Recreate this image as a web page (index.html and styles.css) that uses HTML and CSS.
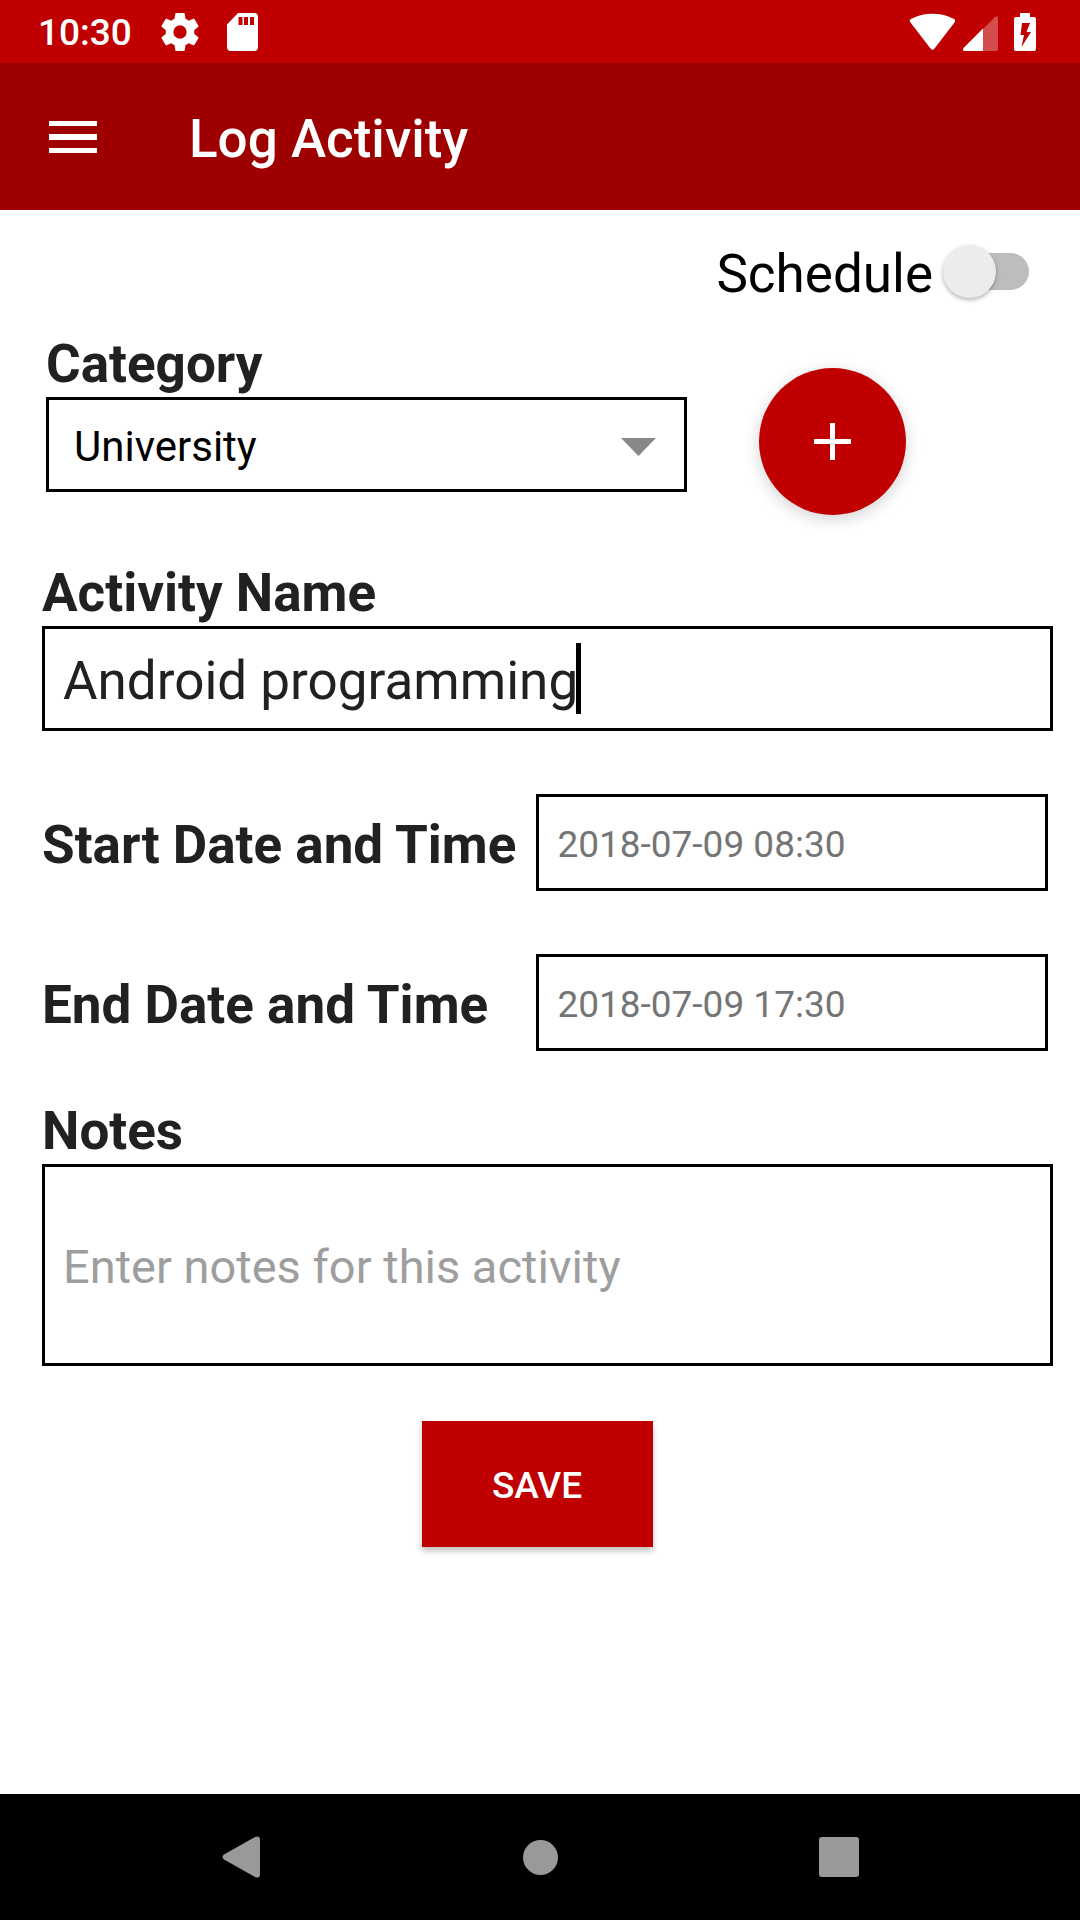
FILE: index.html
```html
<!DOCTYPE html>
<html lang="en">
<head>
  <meta charset="utf-8">
  <meta name="viewport" content="width=device-width, initial-scale=1">
  <title>Log Activity</title>
  <link rel="stylesheet" href="styles.css">
</head>
<body>
  <div class="status-bar">
    <span class="status-time">10:30</span>
    <svg class="status-settings" width="38" height="38" viewBox="2 2 20 20" aria-hidden="true"><path fill="#fff" d="M19.43 12.98c.04-.32.07-.64.07-.98s-.03-.66-.07-.98l2.11-1.65c.19-.15.24-.42.12-.64l-2-3.46c-.12-.22-.39-.3-.61-.22l-2.49 1c-.52-.4-1.08-.73-1.69-.98l-.38-2.65A.488.488 0 0 0 14 2h-4c-.25 0-.46.18-.49.42l-.38 2.65c-.61.25-1.17.59-1.69.98l-2.49-1c-.23-.09-.49 0-.61.22l-2 3.46c-.13.22-.07.49.12.64l2.11 1.65c-.04.32-.07.65-.07.98s.03.66.07.98l-2.11 1.65c-.19.15-.24.42-.12.64l2 3.46c.12.22.39.3.61.22l2.49-1c.52.4 1.08.73 1.69.98l.38 2.65c.03.24.24.42.49.42h4c.25 0 .46-.18.49-.42l.38-2.65c.61-.25 1.17-.59 1.69-.98l2.49 1c.23.09.49 0 .61-.22l2-3.46c.12-.22.07-.49-.12-.64l-2.11-1.65zM12 15.5a3.5 3.5 0 1 1 0-7 3.5 3.5 0 0 1 0 7z"/></svg>
    <svg width="31" height="38" viewBox="0 0 31 38" aria-hidden="true"><path fill="#fff" fill-rule="evenodd" d="M11 0h16a4 4 0 0 1 4 4v30a4 4 0 0 1-4 4H4a4 4 0 0 1-4-4V11.500zM11.500 4v8h4V4zm5.500 0v8h4V4zm6 0v8h4V4z"/></svg>
    <span class="status-space"></span>
    <svg width="46" height="38" viewBox="0 0 46 38" aria-hidden="true"><path fill="#fff" d="M1.500 9.500C.3 8 .3 7 2 6 14.500-1 32.500-1 45 6c1.700 1 1.700 2 .5 3.500L25.500 35.500q-2 2.500-4 0z"/></svg>
    <svg width="35" height="38" viewBox="0 0 35 38" aria-hidden="true"><path fill="#fff" opacity=".3" d="M20 16 32 4q3-2 3 1v31q0 2-2 2H20z"/><path fill="#fff" d="M20 15.500V38H2q-3 0-1.500-3z"/></svg>
    <svg class="status-battery" width="22" height="38" viewBox="0 0 22 38" aria-hidden="true"><path fill="#fff" fill-rule="evenodd" d="M6 0h10v4h4q2 0 2 2v30q0 2-2 2H2q-2 0-2-2V6q0-2 2-2h4zM8 10 6.500 22H10L7.500 34 17 19h-4.500L16 10z"/></svg>
  </div>

  <header class="app-bar">
    <button class="menu-button" type="button" aria-label="Open menu">
      <svg width="48" height="32" viewBox="0 0 48 32" aria-hidden="true"><path fill="#fff" d="M0 0h48v5H0zM0 13h48v6H0zM0 27h48v5H0z"/></svg>
    </button>
    <h1 class="app-title">Log Activity</h1>
  </header>

  <main class="content">
    <form class="activity-form">
      <div class="schedule-row">
        <label class="schedule-label" for="schedule">Schedule</label>
        <input class="switch" type="checkbox" role="switch" id="schedule">
      </div>

      <div class="category-row">
        <div class="category-group">
          <label class="field-label" for="category">Category</label>
          <div class="select-box">
            <select class="select-input" id="category"><option>University</option></select>
            <svg class="select-arrow" width="35" height="18" viewBox="0 0 35 18" aria-hidden="true"><path fill="#888" d="M0 0h35L17.500 18z"/></svg>
          </div>
        </div>
        <button class="add-button" type="button" aria-label="Add category">
          <svg width="37" height="37" viewBox="0 0 37 37" aria-hidden="true"><path fill="#fff" d="M16 0h5v16h16v5H21v16h-5V21H0v-5h16z"/></svg>
        </button>
      </div>

      <div class="name-group">
        <label class="field-label" for="name">Activity Name</label>
        <div class="name-box">
          <input class="name-input" type="text" id="name" value="Android programming">
          <span class="caret"></span>
        </div>
      </div>

      <div class="date-grid">
        <label class="field-label date-label" for="start">Start Date and Time</label>
        <input class="date-input" type="text" id="start" value="2018-07-09 08:30">
        <label class="field-label date-label" for="end">End Date and Time</label>
        <input class="date-input" type="text" id="end" value="2018-07-09 17:30">
      </div>

      <div class="notes-group">
        <label class="field-label" for="notes">Notes</label>
        <textarea class="notes-input" id="notes" placeholder="Enter notes for this activity"></textarea>
      </div>

      <button class="save-button" type="button">SAVE</button>
    </form>
  </main>

  <nav class="system-nav">
    <button class="nav-button" type="button" aria-label="Back">
      <svg width="38" height="42" viewBox="0 0 38 42" aria-hidden="true"><path fill="#999" d="M2 18.500 33 1q5-2 5 3v34q0 5-5 3L2 23.500q-3-2.500 0-5z"/></svg>
    </button>
    <button class="nav-button" type="button" aria-label="Home">
      <svg width="35" height="35" viewBox="0 0 35 35" aria-hidden="true"><circle fill="#999" cx="17.500" cy="17.500" r="17.500"/></svg>
    </button>
    <button class="nav-button" type="button" aria-label="Recent apps">
      <svg width="40" height="40" viewBox="0 0 40 40" aria-hidden="true"><rect fill="#999" width="40" height="40" rx="3"/></svg>
    </button>
  </nav>
</body>
</html>
```
FILE: styles.css
```css
* {
  box-sizing: border-box;
}

body {
  margin: 0;
  min-height: 100vh;
  display: flex;
  flex-direction: column;
  background: #fff;
  color: #212121;
  font-family: Roboto, sans-serif;
}

button,
input,
select,
textarea {
  margin: 0;
  padding: 0;
  border: 0;
  border-radius: 0;
  outline: 0;
  background: none;
  color: inherit;
  font-family: inherit;
}

svg {
  display: block;
  flex: none;
}

/* Status bar */
.status-bar {
  display: flex;
  align-items: center;
  gap: 8px;
  height: 63px;
  padding: 0 44px 0 38px;
  background: #c00000;
  color: #fff;
}

.status-time {
  font-size: 37px;
  font-weight: 500;
  line-height: 44px;
  padding-top: 2px;
}

.status-settings {
  margin: 0 20px 0 21px;
}

.status-space {
  flex: 1;
}

.status-battery {
  margin-left: 8px;
}

/* App bar */
.app-bar {
  display: flex;
  align-items: center;
  gap: 92px;
  height: 147px;
  padding: 0 49px;
  background: #9e0000;
  color: #fff;
}

.app-title {
  margin: 0;
  padding-top: 4px;
  font-size: 53px;
  font-weight: 500;
  line-height: 62px;
}

/* Form */
.content {
  flex: 1;
  padding: 33px 27px 32px 42px;
}

.activity-form {
  display: flex;
  flex-direction: column;
}

.schedule-row {
  display: flex;
  align-items: flex-start;
  justify-content: flex-end;
  gap: 10px;
  padding-right: 24px;
}

.schedule-label {
  color: #000;
  font-size: 53px;
  line-height: 62px;
}

.switch {
  appearance: none;
  display: grid;
  align-items: center;
  width: 86px;
  height: 57px;
}

.switch::before,
.switch::after {
  content: "";
  grid-area: 1 / 1;
}

.switch::before {
  justify-self: end;
  width: 76px;
  height: 37px;
  border-radius: 19px;
  background: #bdbdbd;
}

.switch::after {
  width: 53px;
  height: 53px;
  border-radius: 50%;
  background: #ececec;
  box-shadow: 0 2px 4px rgba(0, 0, 0, 0.3);
}

.field-label {
  font-size: 53px;
  font-weight: 700;
  line-height: 62px;
}

.category-row {
  display: flex;
  align-items: flex-start;
  gap: 72px;
  margin-top: 28px;
  padding-left: 4px;
}

.category-group,
.name-group,
.notes-group {
  display: flex;
  flex-direction: column;
  gap: 2px;
}

.category-group {
  flex: 0 1 641px;
}

.select-box {
  display: grid;
  align-items: center;
  height: 95px;
  border: 3px solid #000;
}

.select-input {
  grid-area: 1 / 1;
  appearance: none;
  height: 89px;
  padding-left: 25px;
  padding-top: 4px;
  color: #000;
  font-size: 42px;
}

.select-arrow {
  grid-area: 1 / 1;
  justify-self: end;
  margin: 4px 28px 0 0;
  pointer-events: none;
}

.add-button {
  display: grid;
  place-items: center;
  flex: none;
  width: 147px;
  height: 147px;
  margin-top: 35px;
  border-radius: 50%;
  background: #c00000;
  box-shadow: 0 4px 16px rgba(0, 0, 0, 0.18);
}

.name-group {
  margin-top: 47px;
}

.name-box {
  display: flex;
  align-items: center;
  height: 105px;
  padding-left: 18px;
  border: 3px solid #000;
}

.name-input {
  field-sizing: content;
  height: 71px;
  padding-top: 4px;
  font-size: 53px;
}

.caret {
  width: 5px;
  height: 71px;
  margin-left: -2px;
  background: #000;
}

.date-grid {
  display: grid;
  grid-template-columns: auto minmax(0, 1fr);
  column-gap: 20px;
  row-gap: 63px;
  align-items: center;
  margin-top: 63px;
  padding-right: 5px;
}

.date-label {
  padding-top: 4px;
}

.date-input {
  width: 100%;
  height: 97px;
  padding: 3px 18px 0;
  border: 3px solid #000;
  color: #757575;
  font-size: 37px;
}

.notes-group {
  margin-top: 49px;
}

.notes-input {
  height: 202px;
  padding: 72px 18px 0;
  border: 3px solid #000;
  resize: none;
  font-size: 47px;
  line-height: 55px;
}

.notes-input::placeholder {
  color: #9e9e9e;
  opacity: 1;
}

.save-button {
  align-self: center;
  width: 231px;
  height: 126px;
  margin: 55px 21px 0 0;
  padding-top: 2px;
  background: #c00000;
  box-shadow: 0 4px 6px rgba(0, 0, 0, 0.25);
  color: #fff;
  font-size: 37px;
  font-weight: 500;
}

/* System navigation */
.system-nav {
  display: flex;
  height: 126px;
  padding: 0 92px;
  background: #000;
}

.nav-button {
  display: grid;
  place-items: center;
  flex: 1;
}
```
